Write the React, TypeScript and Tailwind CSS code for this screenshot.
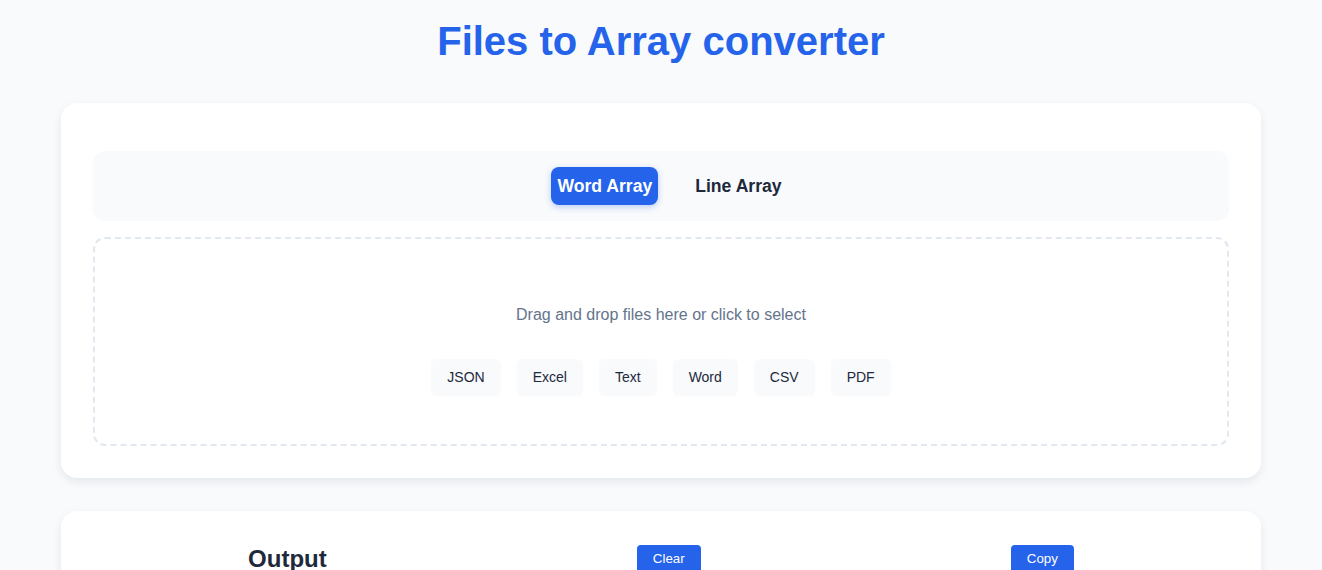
import React from "react";

const chips = ["JSON", "Excel", "Text", "Word", "CSV", "PDF"];

export default function App() {
  return (
    <div
      className="min-h-screen bg-[#f8fafc] pt-[17px] pb-10"
      style={{ fontFamily: '"Liberation Sans", Arial, sans-serif' }}
    >
      <h1 className="text-center text-[40px] leading-[48px] font-bold text-[#2563eb] mb-[38px]">
        Files to Array converter
      </h1>

      <div className="max-w-[1200px] mx-auto bg-white rounded-2xl shadow-[0_4px_10px_rgba(15,23,42,0.08)] px-8 pt-12 pb-8">
        <div className="bg-[#f8fafc] rounded-xl h-[70px] flex items-center justify-center gap-[31px] pl-[17px]">
          <button className="bg-[#2563eb] text-white font-bold text-[17.6px] leading-[20px] py-[9px] px-[6px] rounded-lg shadow-[0_2px_6px_rgba(37,99,235,0.3)]">
            Word Array
          </button>
          <button className="text-[#1e293b] font-bold text-[17.6px] leading-[20px] py-[9px] px-[6px] rounded-lg">
            Line Array
          </button>
        </div>

        <div className="mt-4 border-2 border-dashed border-[#e2e8f0] rounded-xl pt-[64px] pb-[48px] flex flex-col items-center">
          <p className="text-[#64748b] text-base leading-6">
            Drag and drop files here or click to select
          </p>
          <div className="flex gap-4 mt-8">
            {chips.map((c) => (
              <span
                key={c}
                className="bg-[#f8fafc] text-[#1e293b] text-sm leading-[17px] px-4 py-[10px] rounded-md"
              >
                {c}
              </span>
            ))}
          </div>
        </div>
      </div>

      <div className="max-w-[1200px] mx-auto mt-[33px] bg-white rounded-2xl shadow-[0_4px_10px_rgba(15,23,42,0.08)] px-8 pt-8 pb-8">
        <div className="flex items-center justify-around">
          <h2 className="text-2xl leading-8 font-bold text-[#1e293b]">Output</h2>
          <button className="bg-[#2563eb] text-white text-[13.333px] leading-4 px-4 py-1.5 rounded">
            Clear
          </button>
          <button className="bg-[#2563eb] text-white text-[13.333px] leading-4 px-4 py-1.5 rounded">
            Copy
          </button>
        </div>
        <div className="h-40" />
      </div>
    </div>
  );
}
